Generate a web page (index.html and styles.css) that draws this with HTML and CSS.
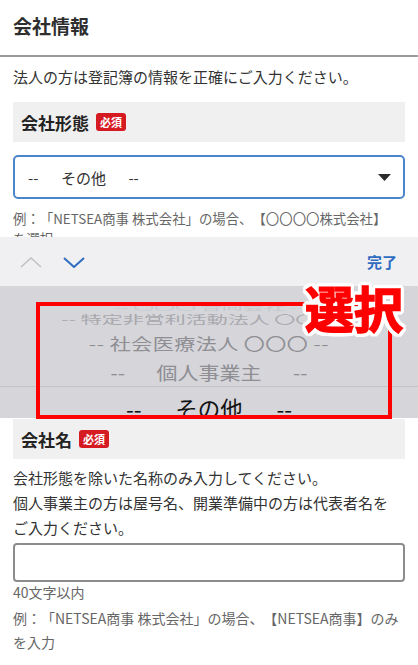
FILE: index.html
```html
<!DOCTYPE html>
<html lang="ja">
<head>
    <meta charset="UTF-8">
    <meta name="viewport" content="width=device-width, initial-scale=1.0">
    <title>会社情報</title>
    <link rel="stylesheet" href="styles.css">
</head>
<body>
    <header class="page-header">
        <h1>会社情報</h1>
    </header>

    <section class="form-section">
        <p class="intro">法人の方は登記簿の情報を正確にご入力ください。</p>

        <div class="field-label">
            <span>会社形態</span>
            <span class="required">必須</span>
        </div>
        <div class="select-box">
            <span>--&emsp;&ensp;その他&emsp;&ensp;--</span>
            <svg class="select-arrow" width="13" height="7" viewBox="0 0 13 7">
                <polygon points="0,0 13,0 6.5,7" fill="#2b2b2b"/>
            </svg>
        </div>
        <p class="hint hint-cut">例：「NETSEA商事 株式会社」の場合、【〇〇〇〇株式会社】<br>を選択</p>
    </section>

    <!-- iOS のピッカー (スクリーンショット上に重なる) -->
    <div class="picker-wrap">
        <div class="picker-toolbar">
            <div class="picker-nav">
                <svg width="22" height="11" viewBox="0 0 22 11">
                    <polyline points="1,10 11,1 21,10" fill="none" stroke="#c2c2c6" stroke-width="1.6"/>
                </svg>
                <svg width="22" height="11" viewBox="0 0 22 11">
                    <polyline points="1,1 11,10 21,1" fill="none" stroke="#2f6cc1" stroke-width="2"/>
                </svg>
            </div>
            <span class="picker-done">完了</span>
        </div>
        <div class="picker-wheel">
            <div class="wheel-row row-a">-- 〇〇〇 合同会社 --</div>
            <div class="wheel-row row-b">-- 特定非営利活動法人 〇〇〇 --</div>
            <div class="wheel-row row-c">-- 社会医療法人 〇〇〇 --</div>
            <div class="wheel-row row-d">--&emsp;&ensp;個人事業主&emsp;&ensp;--</div>
            <div class="wheel-row row-selected">--&emsp;&ensp;その他&emsp;&ensp;--</div>
        </div>
        <div class="mark-box"></div>
        <div class="mark-label">選択</div>
    </div>

    <section class="form-section">
        <div class="field-label field-label-2">
            <span>会社名</span>
            <span class="required">必須</span>
        </div>
        <p class="desc">会社形態を除いた名称のみ入力してください。<br>個人事業主の方は屋号名、開業準備中の方は代表者名を<br>ご入力ください。</p>
        <input type="text" class="text-input">
        <p class="note count">40文字以内</p>
        <p class="note example">例：「NETSEA商事 株式会社」の場合、【NETSEA商事】のみ<br>を入力</p>
    </section>
</body>
</html>
```

FILE: styles.css
```css
* {
    margin: 0;
    padding: 0;
    box-sizing: border-box;
}

body {
    font-family: "Noto Sans CJK JP", "Noto Sans", sans-serif;
    background: white;
    color: #333;
    width: 418px;
    text-spacing-trim: space-all;
}

.page-header {
    height: 57px;
    padding: 12px 13px 0;
    border-bottom: 2px solid #9b9b9b;
}

.page-header h1 {
    font-size: 19px;
    font-weight: bold;
    line-height: 28px;
    color: #2e2e2e;
}

.form-section {
    padding: 0 13px;
}

.intro {
    font-size: 15px;
    line-height: 24px;
    margin-top: 8px;
}

.field-label {
    display: flex;
    align-items: center;
    height: 40px;
    margin-top: 13px;
    padding: 0 8px;
    background: #f0f0f0;
    font-size: 17px;
    font-weight: bold;
    color: #222;
}

.required {
    margin-left: 7px;
    padding: 0 4px;
    height: 18px;
    line-height: 18px;
    background: #d61a22;
    color: white;
    font-size: 11px;
    font-weight: bold;
    border-radius: 3px;
}

.select-box {
    display: flex;
    align-items: center;
    justify-content: space-between;
    height: 44px;
    margin-top: 13px;
    padding: 0 12px 0 13px;
    border: 2px solid #4a86c9;
    border-radius: 5px;
    font-size: 15px;
    color: #333;
}

.hint {
    font-size: 13.4px;
    line-height: 20px;
    color: #666;
}

.hint-cut {
    height: 29px;
    margin-top: 9px;
    overflow: hidden;
}

/* picker */
.picker-wrap {
    position: relative;
}

.picker-toolbar {
    display: flex;
    align-items: center;
    justify-content: space-between;
    height: 49px;
    padding: 0 21px 0 20px;
    background: #f0f0f2;
}

.picker-nav {
    display: flex;
    gap: 21px;
    padding-top: 1px;
}

.picker-nav svg {
    display: block;
}

.picker-done {
    font-size: 15px;
    font-weight: bold;
    color: #2f6cc1;
}

.picker-wheel {
    height: 132px;
    padding-top: 14px;
    background: #d5d5da;
    overflow: hidden;
}

.wheel-row {
    text-align: center;
    font-size: 21px;
    white-space: nowrap;
    color: #8e8e93;
}

.row-a {
    height: 14px;
    line-height: 14px;
    color: #c6c6ca;
    transform: scaleY(0.3);
}

.row-b {
    height: 10px;
    line-height: 10px;
    color: #a8a8ad;
    transform: scaleY(0.55);
}

.row-c {
    height: 39px;
    line-height: 39px;
    letter-spacing: 0.5px;
    transform: scaleY(0.75);
}

.row-d {
    height: 18px;
    line-height: 18px;
    transform: scaleY(0.88);
}

.row-selected {
    height: 43px;
    line-height: 42px;
    margin-top: 5px;
    border-top: 1px solid #c3c3c8;
    font-size: 22.5px;
    color: #111;
}

.mark-box {
    position: absolute;
    left: 36px;
    top: 65px;
    width: 356px;
    height: 117px;
    border: 4px solid #ff0000;
}

.mark-label {
    position: absolute;
    left: 305px;
    top: 46px;
    font-size: 49px;
    line-height: 48px;
    font-weight: bold;
    color: #ff0000;
    -webkit-text-stroke: 1.5px #ff0000;
    text-shadow:
        4px 0 #fff, -4px 0 #fff, 0 4px #fff, 0 -4px #fff,
        3px 3px #fff, -3px 3px #fff, 3px -3px #fff, -3px -3px #fff,
        4px 2px #fff, -4px 2px #fff, 4px -2px #fff, -4px -2px #fff,
        2px 4px #fff, -2px 4px #fff, 2px -4px #fff, -2px -4px #fff;
}

/* 会社名 */
.field-label-2 {
    margin-top: 1px;
}

.desc {
    font-size: 15px;
    line-height: 25px;
    margin-top: 6px;
}

.text-input {
    display: block;
    width: 100%;
    height: 39px;
    margin-top: 3px;
    border: 2px solid #8c8c8c;
    border-radius: 4px;
    background: white;
}

.note {
    font-size: 14px;
    color: #666;
}

.count {
    line-height: 20px;
}

.example {
    margin-top: 4px;
    line-height: 24px;
}
```
